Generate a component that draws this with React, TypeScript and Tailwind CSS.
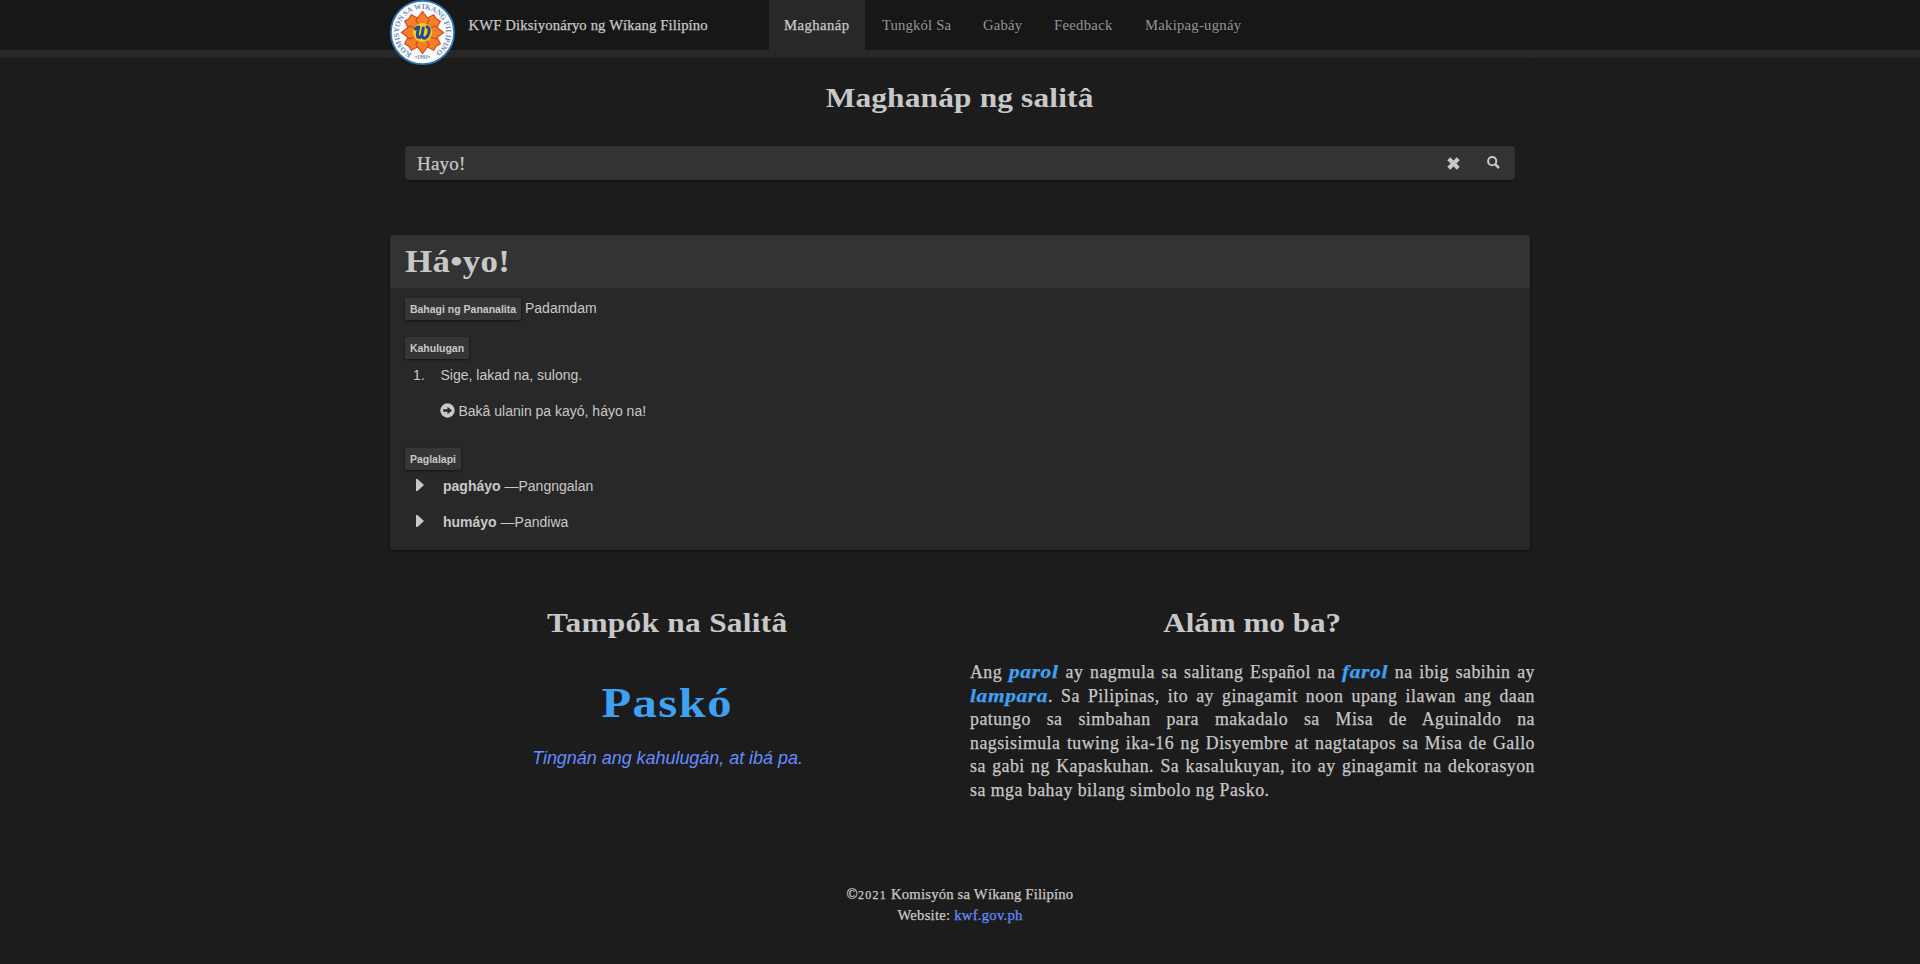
import React from 'react';

const SERIF = "font-['Liberation_Serif',serif]";
const SANS = "font-['Liberation_Sans',sans-serif]";
const STROKE = '[-webkit-text-stroke:0.25px_currentColor]';

function Logo() {
  return (
    <svg viewBox="0 0 65 65" className="block size-[65px]">
      <defs>
        <path id="ring" d="M 21.8 53.6 A 23.6 23.6 0 1 1 43.2 53.6" />
      </defs>
      <circle cx="32.5" cy="32.5" r="31.6" fill="#fdfdfd" stroke="#2f78b7" strokeWidth="1.8" />
      <text fontFamily="Liberation Serif" fontSize="7.6" fontWeight="bold" fill="#6f8cbd">
        <textPath href="#ring" textLength="123" lengthAdjust="spacingAndGlyphs">KOMISYON SA WIKANG FILIPINO</textPath>
      </text>
      <text x="32.5" y="59.4" textAnchor="middle" fontFamily="Liberation Serif" fontSize="5.6" fontWeight="bold" fill="#5f7fb4">•1991•</text>
      <g fill="#f08125" stroke="#d9452b" strokeWidth="1.2">
        {[45, 135, 225, 315].map((a) => (
          <path key={a} d="M32.5 32.5 L25 21 L27.8 12 L32.5 13 L37.2 12 L40 21 Z" transform={`rotate(${a} 32.5 32.5)`} />
        ))}
        {[0, 90, 180, 270].map((a) => (
          <path key={a} d="M32.5 32.5 L26 20 L32.5 11.5 L39 20 Z" transform={`rotate(${a} 32.5 32.5)`} />
        ))}
      </g>
      <circle cx="32.5" cy="32.5" r="9.6" fill="#fbc91d" />
      <path d="M25.4 28.8 Q27.2 26.8 28.8 27 Q26.8 34.5 27.6 36.8 Q29.8 39 32 34.8 L33.3 28 M32 34.8 Q31.8 38.4 34.4 38.2 Q38.4 37.2 39.2 31 Q39.2 28 37 26.8" fill="none" stroke="#1d4c97" strokeWidth="3" strokeLinecap="round" strokeLinejoin="round" />
    </svg>
  );
}

function Label({ children, w }: { children: React.ReactNode; w: string }) {
  return (
    <span className={`flex h-[22px] ${w} items-center justify-center rounded-[2px] bg-[#363636] text-[10.5px] font-bold whitespace-nowrap shadow-[0_1px_3px_rgba(0,0,0,0.55)]`}>
      {children}
    </span>
  );
}

function Word({ children, w }: { children: string; w: string }) {
  return (
    <span className={`inline-block ${w} whitespace-nowrap`}>
      <em className="inline-block origin-left scale-x-[1.2] text-[17.8px] font-bold tracking-[0.55px] text-[#3fa1f2]">{children}</em>
    </span>
  );
}

function Heading({ children, ls }: { children: string; ls: string }) {
  return (
    <h2 className={`flex h-[39px] items-center justify-center text-[28px] leading-[39px] font-bold whitespace-nowrap ${SERIF}`}>
      <span className={ls}>{children}</span>
    </h2>
  );
}

function Affix({ word, kind }: { word: string; kind: string }) {
  return (
    <li className="flex h-5 items-center pl-[11px]">
      <svg viewBox="0 0 8 12" className="mb-[2px] h-3 w-2"><path d="M0 0h1.5L8 6 1.5 12H0z" fill="#c8c8c8" /></svg>
      <span className="ml-[19px]"><b>{word}</b> —{kind}</span>
    </li>
  );
}

const LINE = 'block h-[23.6px] [text-align-last:justify]';

export default function App() {
  return (
    <div className={`h-[964px] overflow-hidden bg-[#1c1c1c] text-[14px] leading-5 text-[#c8c8c8] ${SANS}`}>
      <header className="h-[58px] border-b-8 border-[#282828] bg-[#171717]">
        <div className={`mx-auto flex h-[50px] w-[1140px] items-center text-[14.7px] ${SERIF}`}>
          <div className="relative z-10 h-[50px] w-[65px]"><Logo /></div>
          <div className={`ml-[13.5px] w-[300.5px] tracking-[0.13px] whitespace-nowrap ${STROKE}`}>KWF Diksiyonáryo ng Wíkang Filipíno</div>
          <nav className="flex h-[50px] items-center whitespace-nowrap text-[#959595]">
            <a className={`flex h-[50px] w-24 items-center bg-[#282828] pl-[15px] tracking-[0.45px] text-[#c8c8c8] ${STROKE}`}>Maghanáp</a>
            <a className="w-[101px] pl-[17px] tracking-[0.15px]">Tungkól Sa</a>
            <a className="w-[71px] pl-[17px] tracking-[0.17px]">Gabáy</a>
            <a className="w-[91px] pl-[17px] tracking-[0.29px]">Feedback</a>
            <a className="pl-[17px] tracking-[0.25px]">Makipag-ugnáy</a>
          </nav>
        </div>
      </header>

      <main className="mx-auto w-[1170px]">
        <div className="mx-[15px] h-[157px] rounded-[3px] pt-5 shadow-[0_1px_1px_rgba(0,0,0,0.12)]">
          <Heading ls="scale-x-[1.12] tracking-[0.15px]">Maghanáp ng salitâ</Heading>
          <div className="mx-[15px] mt-[29px] flex h-[34px] items-center rounded-[4px] bg-[#333333] pl-3 shadow-[0_1px_2px_rgba(0,0,0,0.6)]">
            <span className={`flex-1 pt-px text-[19px] tracking-[0.2px] ${SERIF} ${STROKE}`}>Hayo!</span>
            <svg viewBox="0 0 12 12" className="mr-[27px] size-[13px]"><path d="M1.6 1.6L10.4 10.4M10.4 1.6L1.6 10.4" stroke="#c8c8c8" strokeWidth="3.8" /></svg>
            <svg viewBox="0 0 13 13" className="mr-[15px] mb-[2px] size-[13px]"><circle cx="5.2" cy="5.2" r="4.1" fill="none" stroke="#c8c8c8" strokeWidth="2" /><path d="M8.2 8.2L12 12" stroke="#c8c8c8" strokeWidth="2.5" /></svg>
          </div>
        </div>

        <section className="mx-[15px] mt-5 h-[315px] rounded-[3px] bg-[#282828] shadow-[0_1px_3px_rgba(0,0,0,0.6)]">
          <h1 className={`flex h-[53px] items-center rounded-t-[3px] bg-[#333333] pb-px pl-[15px] text-[32px] font-bold ${SERIF}`}>
            <span className="origin-left scale-x-[1.09] tracking-[0.3px]">Há•yo!</span>
          </h1>
          <div className="px-[15px] pt-[10px]">
            <div className="flex h-[22px] items-center"><Label w="w-[116px]">Bahagi ng Pananalita</Label><span className="ml-1 pb-[2px]">Padamdam</span></div>
            <div className="mt-[17px]"><Label w="w-[64px]">Kahulugan</Label></div>
            <div className="mt-[6px] flex pl-2"><span className="w-[27.5px]">1.</span><span>Sige, lakad na, sulong.</span></div>
            <div className="mt-4 flex h-5 items-center pl-[35px]">
              <svg viewBox="0 0 14 14" className="mr-[3.5px] mb-[2px] size-[15px]"><circle cx="7" cy="7" r="6.7" fill="#c8c8c8" /><path d="M3 5.9h4V3.4L11.2 7 7 10.6V8.1H3z" fill="#282828" /></svg>
              <span>Bakâ ulanin pa kayó, háyo na!</span>
            </div>
            <div className="mt-[27px]"><Label w="w-[56px]">Paglalapi</Label></div>
            <ul className="mt-[6px] flex flex-col gap-4">
              <Affix word="pagháyo" kind="Pangngalan" />
              <Affix word="humáyo" kind="Pandiwa" />
            </ul>
          </div>
        </section>

        <div className="mt-[53px] grid h-[282px] grid-cols-2">
          <section className="flex flex-col items-center">
            <Heading ls="scale-x-[1.12] tracking-[0.25px]">Tampók na Salitâ</Heading>
            <div className={`mt-[36px] h-[50px] scale-x-[1.13] text-[43px] leading-[50px] font-bold tracking-[1.3px] text-[#3fa1f2] ${SERIF}`}>Paskó</div>
            <a className="mt-[18px] h-[25px] text-[18px] leading-[25px] tracking-[-0.04px] text-[#668cff] italic">Tingnán ang kahulugán, at ibá pa.</a>
          </section>
          <section>
            <Heading ls="scale-x-[1.11]">Alám mo ba?</Heading>
            <p className={`mt-[19px] ml-[10px] w-[565px] text-[17.8px] leading-[23.6px] tracking-[0.5px] whitespace-nowrap ${SERIF} ${STROKE}`}>
              <span className={LINE}>Ang <Word w="w-[50px]">parol</Word> ay nagmula sa salitang Español na <Word w="w-[46px]">farol</Word> na ibig sabihin ay</span>
              <span className={LINE}><Word w="w-[78px]">lampara</Word>. Sa Pilipinas, ito ay ginagamit noon upang ilawan ang daan</span>
              <span className={LINE}>patungo sa simbahan para makadalo sa Misa de Aguinaldo na</span>
              <span className={LINE}>nagsisimula tuwing ika-16 ng Disyembre at nagtatapos sa Misa de Gallo</span>
              <span className={LINE}>sa gabi ng Kapaskuhan. Sa kasalukuyan, ito ay ginagamit na dekorasyon</span>
              <span className="block h-[23.6px]">sa mga bahay bilang simbolo ng Pasko.</span>
            </p>
          </section>
        </div>
      </main>

      <footer className={`-mt-px text-center text-[14.7px] leading-5 ${SERIF} ${STROKE}`}>
        <div className="tracking-[0.19px]">©<span className="text-[12px] tracking-[1.3px]">2021</span> Komisyón sa Wíkang Filipíno</div>
        <div className="tracking-[0.24px]">Website: <a className="text-[#668cff]">kwf.gov.ph</a></div>
      </footer>
    </div>
  );
}
